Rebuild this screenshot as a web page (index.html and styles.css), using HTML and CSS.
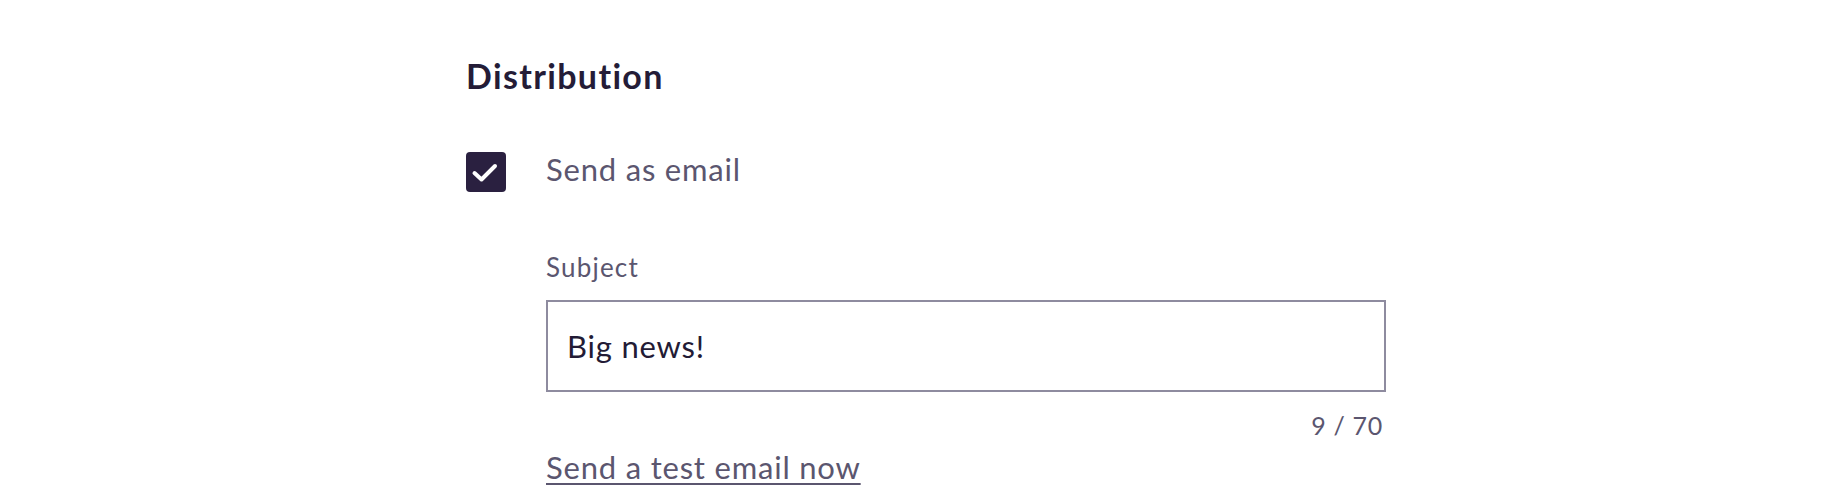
FILE: index.html
```html
<!DOCTYPE html>
<html lang="en">
<head>
<meta charset="utf-8">
<title>Distribution</title>
<link rel="stylesheet" href="styles.css">
</head>
<body>
<main class="page">
  <section class="distribution">
    <h2 class="title">Distribution</h2>
    <label class="check-row">
      <span class="checkbox" aria-hidden="true">
        <svg viewBox="0 0 40 40" width="40" height="40">
          <polyline points="8.5,21 15.5,27.5 29,14" fill="none" stroke="#ffffff" stroke-width="4" stroke-linecap="round" stroke-linejoin="round"/>
        </svg>
      </span>
      <span class="check-label">Send as email</span>
    </label>
    <div class="email-fields">
      <label class="field-label" for="subject">Subject</label>
      <input class="text-input" id="subject" type="text" value="Big news!">
      <div class="counter">9 / 70</div>
      <a class="test-link" href="#">Send a test email now</a>
    </div>
  </section>
</main>
</body>
</html>
```

FILE: styles.css
```css
html, body {
  margin: 0;
  padding: 0;
  background: #ffffff;
}

body {
  font-family: Lato, "Open Sans", sans-serif;
  font-variant-ligatures: none;
  color: #5b566f;
}

.page {
  padding-left: 466px;
  padding-top: 56px;
}

.distribution {
  display: flex;
  flex-direction: column;
  align-items: flex-start;
}

.title {
  margin: 0;
  font-size: 34px;
  line-height: 1.2;
  font-weight: 700;
  letter-spacing: 1.35px;
  color: #241c37;
}

.check-row {
  display: flex;
  align-items: flex-start;
  gap: 40px;
  margin-top: 54px;
}

.checkbox {
  display: block;
  width: 40px;
  height: 40px;
  margin-top: 1px;
  border-radius: 4px;
  background: #2a2040;
}

.checkbox svg {
  display: block;
}

.check-label {
  font-size: 31px;
  line-height: 1.2;
  letter-spacing: 0.8px;
  color: #5b566f;
}

.email-fields {
  margin-left: 80px;
  margin-top: 60px;
  width: 840px;
  display: flex;
  flex-direction: column;
}

.field-label {
  font-size: 26px;
  line-height: 1.2;
  letter-spacing: 1.2px;
  color: #5b566f;
}

.text-input {
  box-sizing: border-box;
  margin-top: 17px;
  width: 840px;
  height: 92px;
  padding: 0 19px;
  border: 2px solid #8e8b9f;
  border-radius: 0;
  outline: none;
  font-family: Lato, "Open Sans", sans-serif;
  font-size: 31px;
  letter-spacing: 0.8px;
  color: #231b35;
  background: #ffffff;
}

.counter {
  margin-top: 18px;
  padding-right: 3px;
  text-align: right;
  font-size: 25px;
  line-height: 1.2;
  letter-spacing: 0.7px;
  color: #5b566f;
}

.test-link {
  align-self: flex-start;
  margin-top: 9px;
  font-size: 31px;
  line-height: 1.2;
  letter-spacing: 0.8px;
  color: #5b566f;
  text-decoration: underline;
  text-decoration-thickness: 2px;
  text-underline-offset: 4px;
}
```
